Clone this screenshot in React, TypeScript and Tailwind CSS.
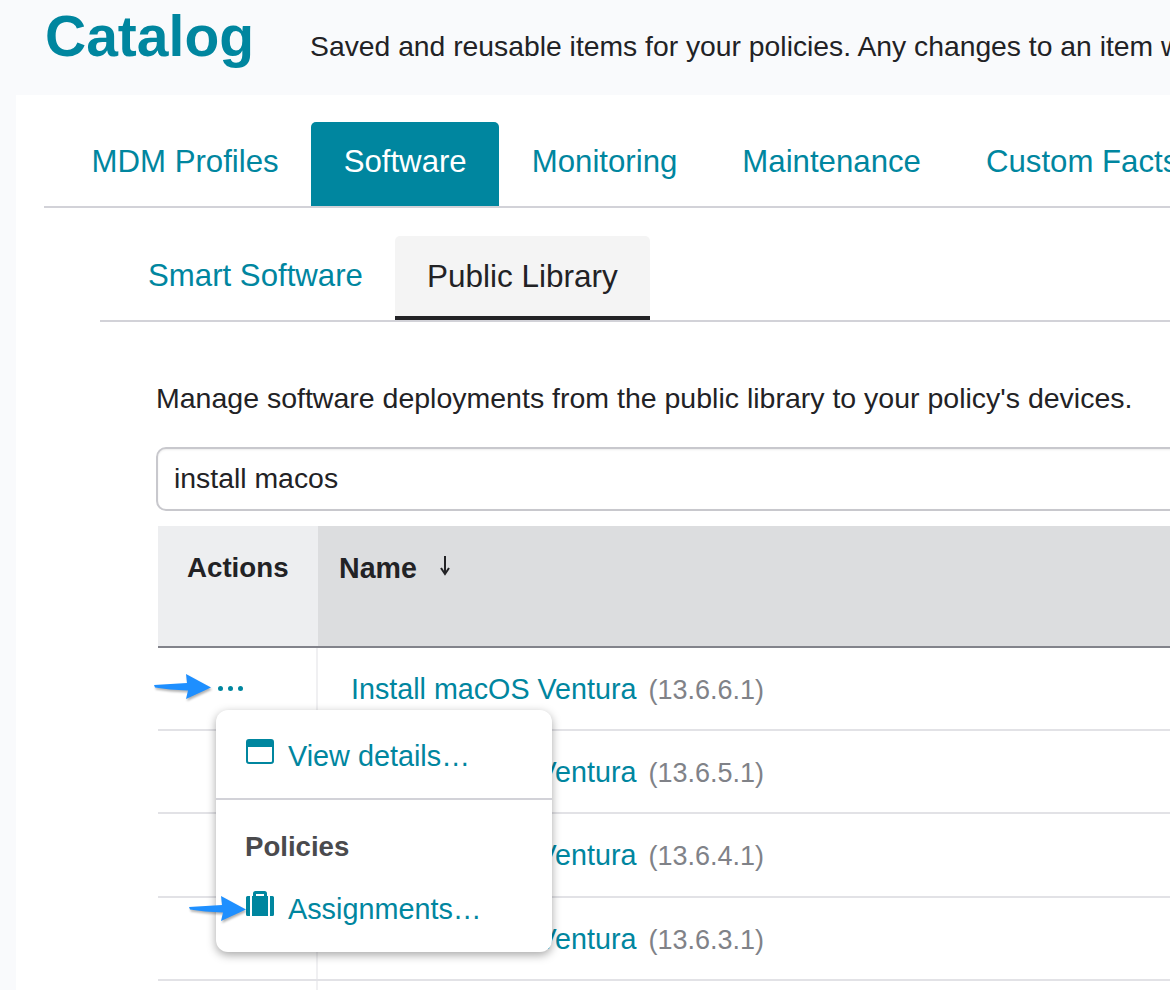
import { ReactNode } from 'react';

const TOP_TABS = ['MDM Profiles', 'Software', 'Monitoring', 'Maintenance', 'Custom Facts'];
const ROWS = [
  { version: '13.6.6.1', height: 'h-[83px]' },
  { version: '13.6.5.1', height: 'h-[83px]' },
  { version: '13.6.4.1', height: 'h-[84px]' },
  { version: '13.6.3.1', height: 'h-[83px]' },
];

function BlueArrow({ className }: { className: string }) {
  return (
    <svg className={className} width="60" height="30" viewBox="0 0 60 30">
      <path
        d="M1 12 L34 10 L33 1 L58 14.5 L33 26 L35 17.5 Q16 17 2 14.6 Z"
        fill="#1e8fff"
        className="drop-shadow-[1px_2px_1px_rgba(0,0,0,0.3)]"
      />
    </svg>
  );
}

function BrowserIcon() {
  return (
    <svg width="28" height="25" viewBox="0 0 28 25" fill="none">
      <rect x="1" y="1" width="26" height="23" rx="2" stroke="#00869f" strokeWidth="2" />
      <path d="M1 3 a2 2 0 0 1 2 -2 h22 a2 2 0 0 1 2 2 v5 h-26 z" fill="#00869f" />
    </svg>
  );
}

function SuitcaseIcon() {
  return (
    <svg width="28" height="26" viewBox="0 0 28 26" fill="#00869f">
      <path d="M1.5 5 h2.5 v20 h-2.5 a1.5 1.5 0 0 1 -1.5 -1.5 v-17 a1.5 1.5 0 0 1 1.5 -1.5 z" />
      <path d="M24 5 h2.5 a1.5 1.5 0 0 1 1.5 1.5 v17 a1.5 1.5 0 0 1 -1.5 1.5 h-2.5 z" />
      <path
        fillRule="evenodd"
        d="M7 5 V2.5 A2.5 2.5 0 0 1 9.5 0 h9 A2.5 2.5 0 0 1 21 2.5 V5 h1 v20 H6 V5 z M10 3 v2 h8 V3 z"
      />
    </svg>
  );
}

function MenuItem({ icon, label, className, textClass }: { icon: ReactNode; label: string; className: string; textClass: string }) {
  return (
    <div className={`flex items-start ${className}`}>
      <span className="mr-[14px] shrink-0">{icon}</span>
      <span className={`text-[28.8px] leading-[32px] text-[#00869f] ${textClass}`}>{label}</span>
    </div>
  );
}

export default function App() {
  return (
    <div className="relative h-[990px] w-[1170px] overflow-hidden bg-[#f9fafc] font-['Liberation_Sans',Arial,sans-serif] text-[#222225]">
      {/* Page header */}
      <header className="flex h-[95px] items-baseline overflow-hidden whitespace-nowrap pl-[45px]">
        <h1 className="text-[57px] font-bold leading-[73px] text-[#00869f]">Catalog</h1>
        <p className="ml-[56px] text-[28.3px]">
          Saved and reusable items for your policies. Any changes to an item will apply everywhere.
        </p>
      </header>

      <main className="ml-[16px] h-[895px] bg-white pl-[28px] pt-[27px]">
        {/* Top tabs */}
        <nav className="flex h-[86px] overflow-hidden whitespace-nowrap border-b-2 border-[#d2d2d8] pl-[15px]">
          {TOP_TABS.map((tab) => (
            <div
              key={tab}
              className={`h-[84px] shrink-0 rounded-t-[5px] px-[32.5px] pt-[22px] text-[31.2px] leading-[36px] ${
                tab === 'Software' ? 'bg-[#00869f] text-white' : 'text-[#00869f]'
              }`}
            >
              {tab}
            </div>
          ))}
        </nav>

        <section className="pl-[56px] pt-[28px]">
          {/* Sub tabs */}
          <div className="flex h-[86px] whitespace-nowrap border-b-2 border-[#d2d2d8] pl-[16px]">
            <div className="h-[84px] px-[32px] pt-[22px] text-[31.2px] leading-[36px] text-[#00869f]">Smart Software</div>
            <div className="h-[84px] rounded-t-[5px] border-b-4 border-[#222225] bg-[#f4f4f4] px-[32px] pt-[22px] text-[31.5px] leading-[36px]">
              Public Library
            </div>
          </div>

          <div className="pl-[56px]">
            <p className="mt-[59px] whitespace-nowrap text-[28.5px] leading-[34px]">
              Manage software deployments from the public library to your policy's devices.
            </p>

            <div className="mt-[32px] flex h-[64px] w-[1100px] items-center rounded-[10px] border-2 border-[#c8c8cd] pb-[2px] pl-[16px] text-[28.4px] shadow-[inset_0_1px_2px_rgba(0,0,0,0.08)]">
              install macos
            </div>

            {/* Table */}
            <div className="ml-[2px] mt-[15px] w-[1100px]">
              <div className="flex h-[122px] border-b-2 border-[#82838b] font-bold">
                <div className="w-[160px] bg-[#edeef0] pl-[29px] pt-[24px] text-[27.7px] leading-[36px]">Actions</div>
                <div className="flex flex-1 bg-[#dcdddf] pl-[21px] pt-[24px] text-[28.6px] leading-[36px]">
                  Name
                  <svg className="ml-[21px] mt-[4px]" width="14" height="22" viewBox="0 0 14 22" fill="none" stroke="#222225" strokeWidth="2">
                    <path d="M7 2 V19 M3 14 L7 20 L11 14" />
                  </svg>
                </div>
              </div>
              {ROWS.map((row, i) => (
                <div key={row.version} className={`flex ${row.height} border-b-2 border-[#e2e2e6]`}>
                  <div className="flex w-[160px] shrink-0 gap-[5px] border-r-2 border-[#f0f0f2] pl-[60px] pt-[38px]">
                    {i === 0 && (
                      <>
                        <span className="size-[5px] rounded-full bg-[#00869f]" />
                        <span className="size-[5px] rounded-full bg-[#00869f]" />
                        <span className="size-[5px] rounded-full bg-[#00869f]" />
                      </>
                    )}
                  </div>
                  <div className="whitespace-nowrap pl-[33px] pt-[23px] text-[28.7px] leading-[36px] text-[#00869f]">
                    Install macOS Ventura
                    <span className="ml-[12px] text-[27px] text-[#808288]">({row.version})</span>
                  </div>
                </div>
              ))}
              <div className="h-[40px] w-[160px] border-r-2 border-[#f0f0f2]" />
            </div>
          </div>
        </section>
      </main>

      {/* Row actions menu */}
      <div className="absolute left-[216px] top-[710px] h-[242px] w-[336px] rounded-[12px] bg-white shadow-[0_3px_10px_rgba(0,0,0,0.35)]">
        <MenuItem
          className="h-[90px] border-b-2 border-[#d2d2d8] pl-[30px] pt-[29px]"
          textClass="mt-px"
          icon={<BrowserIcon />}
          label="View details…"
        />
        <div className="pl-[29px] pt-[29px] text-[27.6px] font-bold leading-[36px] text-[#4a4a4d]">Policies</div>
        <MenuItem className="pl-[30px] pt-[26px]" textClass="mt-[2px]" icon={<SuitcaseIcon />} label="Assignments…" />
      </div>

      {/* Annotation arrows */}
      <BlueArrow className="absolute left-[153px] top-[673px]" />
      <BlueArrow className="absolute left-[188px] top-[895px]" />
    </div>
  );
}
